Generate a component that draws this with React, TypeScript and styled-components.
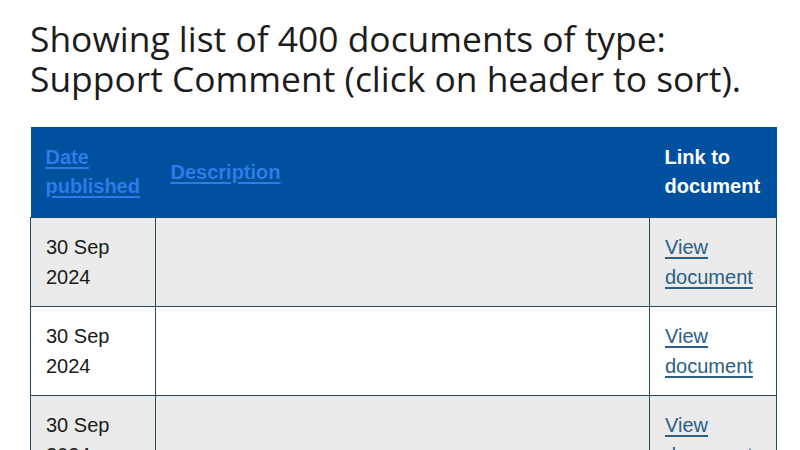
import { createGlobalStyle } from 'styled-components';
import styled from 'styled-components';

const GlobalStyle = createGlobalStyle`
    body {
        margin: 0;
        background: #ffffff;
    }
`;

const Page = styled.div`
    padding: 18px 23px 0 30px;
`;

const Title = styled.h1`
    margin: 0 0 29px;
    font-family: 'Open Sans', sans-serif;
    font-size: 35.4px;
    font-weight: 400;
    line-height: 40px;
    color: #1c1c1c;
`;

const Table = styled.table`
    width: 747px;
    border-collapse: collapse;
    table-layout: fixed;
    font-family: 'Liberation Sans', Arial, sans-serif;
`;

const HeadCell = styled.th`
    background: #0050a0;
    color: #ffffff;
    padding: 16px 15px;
    font-size: 20px;
    line-height: 29px;
    font-weight: 700;
    text-align: left;
    vertical-align: middle;
`;

const SortLink = styled.a`
    color: #2f7be6;
    text-decoration: underline;
    text-underline-offset: 3px;
    cursor: pointer;
`;

const Row = styled.tr<{ $shaded: boolean }>`
    background: ${({ $shaded }) => ($shaded ? '#ebebeb' : '#ffffff')};
`;

const Cell = styled.td`
    border: 1px solid #24495b;
    padding: 14px 15px;
    font-size: 20px;
    line-height: 30px;
    color: #1a1a1a;
    vertical-align: top;
`;

const DocLink = styled.a`
    color: #2a5f86;
    text-decoration: underline;
    text-underline-offset: 3px;
`;

const rows = [
    { date: '30 Sep 2024', description: '' },
    { date: '30 Sep 2024', description: '' },
    { date: '30 Sep 2024', description: '' },
];

export default function App() {
    return (
        <>
            <GlobalStyle />
            <Page>
                <Title>
                    Showing list of 400 documents of type:
                    <br />
                    Support Comment (click on header to sort).
                </Title>
                <Table>
                    <colgroup>
                        <col style={{ width: 125 }} />
                        <col />
                        <col style={{ width: 127 }} />
                    </colgroup>
                    <thead>
                        <tr>
                            <HeadCell>
                                <SortLink>Date published</SortLink>
                            </HeadCell>
                            <HeadCell>
                                <SortLink>Description</SortLink>
                            </HeadCell>
                            <HeadCell>Link to document</HeadCell>
                        </tr>
                    </thead>
                    <tbody>
                        {rows.map((row, i) => (
                            <Row key={i} $shaded={i % 2 === 0}>
                                <Cell>{row.date}</Cell>
                                <Cell>{row.description}</Cell>
                                <Cell>
                                    <DocLink href="#">View document</DocLink>
                                </Cell>
                            </Row>
                        ))}
                    </tbody>
                </Table>
            </Page>
        </>
    );
}
